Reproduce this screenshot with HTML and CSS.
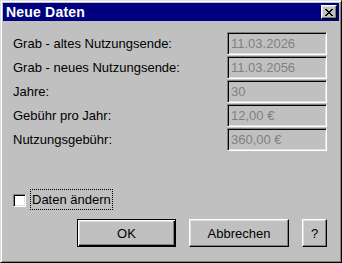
FILE: index.html
```html
<!DOCTYPE html>
<html lang="de">
<head>
  <meta charset="UTF-8">
  <title>Neue Daten</title>
  <link rel="stylesheet" href="styles.css">
</head>
<body>

  <div class="window">
    <div class="titlebar">
      <span class="title">Neue Daten</span>
      <button class="close-btn" aria-label="Schließen">
        <svg width="8" height="7" viewBox="0 0 8 7">
          <path d="M0 0h2v1h1v1h2v-1h1v-1h2v1h-1v1h-1v1h-1v1h1v1h1v1h1v1h-2v-1h-1v-1h-2v1h-1v1h-2v-1h1v-1h1v-1h1v-1h-1v-1h-1v-1h-1z" fill="#000"/>
        </svg>
      </button>
    </div>

    <div class="content">
      <!-- Daten -->
      <div class="fields">
        <label class="label">Grab - altes Nutzungsende:</label>
        <div class="field">11.03.2026</div>
        <label class="label">Grab - neues Nutzungsende:</label>
        <div class="field">11.03.2056</div>
        <label class="label">Jahre:</label>
        <div class="field">30</div>
        <label class="label">Gebühr pro Jahr:</label>
        <div class="field">12,00 €</div>
        <label class="label">Nutzungsgebühr:</label>
        <div class="field">360,00 €</div>
      </div>

      <label class="check-row">
        <span class="checkbox"></span>
        <span class="check-text">Daten ändern</span>
      </label>

      <div class="buttons">
        <button class="btn default-btn">OK</button>
        <button class="btn">Abbrechen</button>
        <button class="btn help-btn">?</button>
      </div>
    </div>
  </div>

</body>
</html>
```

FILE: styles.css
```css
* {
  box-sizing: border-box;
}

body {
  margin: 0;
  font-family: "Liberation Sans", Arial, sans-serif;
  font-size: 13px;
  background: #c0c0c0;
}

.window {
  width: 342px;
  height: 263px;
  background: #c0c0c0;
  border: 1px solid;
  border-color: #dfdfdf #000 #000 #dfdfdf;
  box-shadow: inset 1px 1px #fff, inset -1px -1px #808080;
  padding: 2px;
}

.titlebar {
  height: 18px;
  background: #000080;
  display: flex;
  align-items: center;
  justify-content: space-between;
  padding: 0 2px 0 3px;
}

.title {
  color: white;
  font-weight: bold;
  font-size: 14px;
  letter-spacing: 0.2px;
}

.close-btn {
  width: 16px;
  height: 14px;
  padding: 0;
  background: #c0c0c0;
  border: 1px solid;
  border-color: #fff #000 #000 #fff;
  box-shadow: inset -1px -1px #808080, inset 1px 1px #dfdfdf;
  display: flex;
  align-items: center;
  justify-content: center;
}

.close-btn svg {
  display: block;
  margin-left: -1px;
}

.content {
  padding: 11px 12px 0 10px;
}

.fields {
  display: grid;
  grid-template-columns: 1fr 100px;
  grid-auto-rows: 23px;
  row-gap: 1px;
}

.label {
  color: #000;
  display: flex;
  align-items: center;
}

.field {
  background: #c0c0c0;
  color: #808080;
  border: 1px solid;
  border-color: #808080 #fff #fff #808080;
  box-shadow: inset 1px 1px #000, inset -1px -1px #dfdfdf;
  padding: 0 3px;
  display: flex;
  align-items: center;
}

.check-row {
  display: flex;
  align-items: center;
  margin-top: 38px;
  height: 21px;
}

.checkbox {
  width: 13px;
  height: 13px;
  margin-top: 2px;
  background: white;
  border: 1px solid;
  border-color: #808080 #fff #fff #808080;
  box-shadow: inset 1px 1px #000, inset -1px -1px #dfdfdf;
}

.check-text {
  margin-left: 4px;
  padding: 2px 2px;
  height: 21px;
  display: flex;
  align-items: center;
  outline: 1px dotted #000;
  outline-offset: -1px;
}

.buttons {
  display: flex;
  justify-content: flex-end;
  gap: 13px;
  margin-top: 9px;
}

.btn {
  height: 28px;
  width: 100px;
  font-family: "Liberation Sans", Arial, sans-serif;
  font-size: 13px;
  color: #000;
  background: #c0c0c0;
  border: 1px solid;
  border-color: #fff #000 #000 #fff;
  box-shadow: inset -1px -1px #808080, inset 1px 1px #dfdfdf;
  padding: 0;
}

.default-btn {
  width: 99px;
  border-color: #000;
  box-shadow: inset 1px 1px #fff, inset -1px -1px #000, inset -2px -2px #808080, inset 2px 2px #dfdfdf;
}

.help-btn {
  width: 25px;
}
```
